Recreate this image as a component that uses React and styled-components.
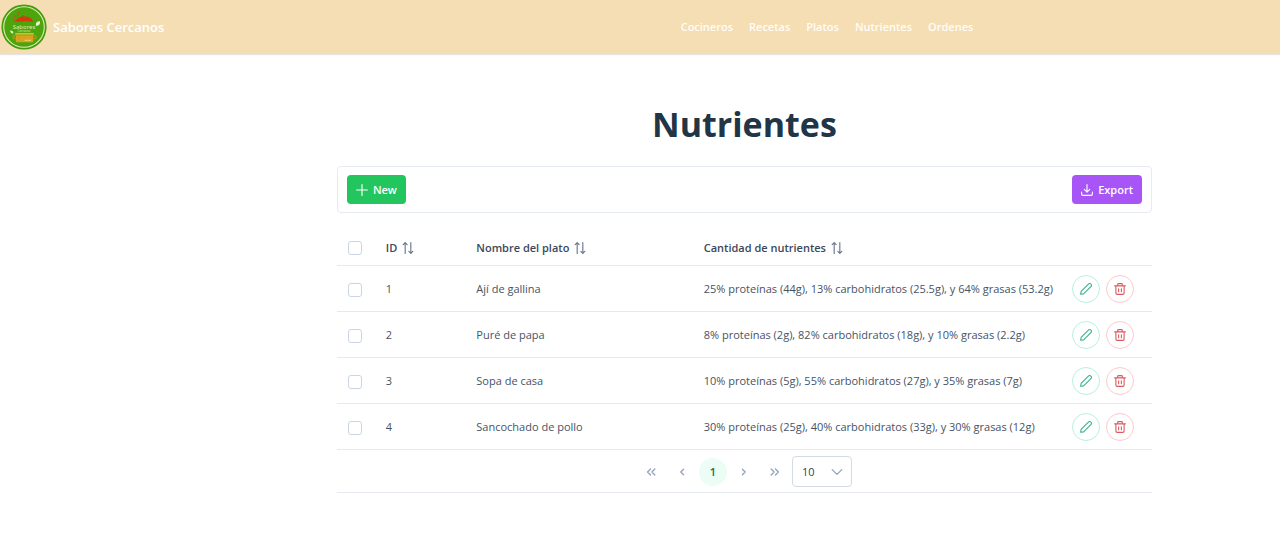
import React from 'react';
import styled, { createGlobalStyle, css } from 'styled-components';

const GlobalStyle = createGlobalStyle`
  *, *::before, *::after { box-sizing: border-box; }
  body {
    margin: 0;
    background: #ffffff;
    color: #465366;
    font-family: "Open Sans", "Noto Sans", sans-serif;
    font-size: 11px;
    line-height: 16px;
  }
  button, select, input { font: inherit; }
`;

const Header = styled.header`
  display: grid;
  grid-template-columns: 374fr 906fr;
  align-items: center;
  height: 54px;
  background: #f5deb3;
  box-shadow: 0 1px 1px #e5e5e5;
`;

const Brand = styled.a`
  display: flex;
  align-items: center;
  gap: 6px;
  padding-left: 1px;
  color: #ffffff;
  font-size: 13px;
  font-weight: 600;
  text-decoration: none;
  white-space: nowrap;
`;

const Nav = styled.nav`
  display: flex;
  justify-content: center;
  gap: 16px;
`;

const NavLink = styled.a`
  color: #fffdf8;
  font-weight: 600;
  text-decoration: none;
`;

const Main = styled.main`
  margin: 0 10% 0 26.32%;
  padding-top: 46px;
`;

const Title = styled.h1`
  margin: 0 0 18px;
  color: #213547;
  font-size: 34px;
  font-weight: 700;
  line-height: 48px;
  text-align: center;
`;

const Toolbar = styled.div`
  display: flex;
  align-items: center;
  justify-content: space-between;
  padding: 8px 9px;
  margin-bottom: 18px;
  border: 1px solid #e6ebf1;
  border-radius: 4px;
`;

const ActionButton = styled.button`
  display: flex;
  align-items: center;
  gap: 5px;
  height: 29px;
  padding: 0 9px;
  border: 0;
  border-radius: 4px;
  background: ${({ $color }) => $color};
  color: #ffffff;
  font-weight: 600;
`;

const Table = styled.table`
  width: 100%;
  table-layout: fixed;
  border-collapse: separate;
  border-spacing: 0;
`;

const Column = styled.col`
  width: ${({ $share }) => $share}%;
`;

const cell = css`
  padding: 0 9px;
  border-bottom: 1px solid #e6e9ee;
  text-align: left;
  white-space: nowrap;
`;

const HeadCell = styled.th`
  ${cell}
  height: 35px;
  font-weight: 600;
`;

const Cell = styled.td`
  ${cell}
  height: 46px;
`;

const SortButton = styled.button`
  display: flex;
  align-items: center;
  gap: 5px;
  padding: 0;
  border: 0;
  background: none;
  color: #64748b;
`;

const SortLabel = styled.span`
  color: #3b475a;
`;

const Checkbox = styled.input`
  appearance: none;
  display: block;
  width: 14px;
  height: 14px;
  margin: 2px 0 0 2px;
  border: 1px solid #cbd5e1;
  border-radius: 3px;
  background: #ffffff;
  &:checked { background: #10b981; }
  th > & { margin-top: 0; }
`;

const RowActions = styled.div`
  display: flex;
  gap: 6px;
`;

const RoundButton = styled.button`
  display: grid;
  place-items: center;
  width: 28px;
  height: 28px;
  padding: 0;
  border: 1px solid ${({ $danger }) => ($danger ? '#fecaca' : '#b5f2d8')};
  border-radius: 50%;
  background: #ffffff;
  color: ${({ $danger }) => ($danger ? '#dc5a5e' : '#3bb58b')};
`;

const Paginator = styled.nav`
  display: flex;
  align-items: center;
  justify-content: center;
  gap: 3px;
  padding: 6px 0 5px;
  border-bottom: 1px solid #e6e9ee;
`;

const PageButton = styled.button`
  display: grid;
  place-items: center;
  width: 28px;
  height: 28px;
  padding: 0;
  border: 0;
  border-radius: 50%;
  background: ${({ $active }) => ($active ? '#ecfdf5' : 'transparent')};
  color: ${({ $active }) => ($active ? '#047857' : '#94a3b8')};
  font-weight: 600;
`;

const SelectBox = styled.div`
  display: grid;
  align-items: center;
  color: #94a3b8;
  > * { grid-area: 1 / 1; }
  > svg {
    justify-self: end;
    margin-right: 9px;
    pointer-events: none;
  }
`;

const Select = styled.select`
  appearance: none;
  width: 60px;
  height: 31px;
  padding: 0 9px;
  border: 1px solid #d3dae4;
  border-radius: 4px;
  background: #ffffff;
  color: #334155;
`;

const Icon = ({ size = 12, stroke = 1.3, children }) => (
  <svg
    width={size}
    height={size}
    viewBox="0 0 14 14"
    fill="none"
    stroke="currentColor"
    strokeWidth={stroke}
    strokeLinecap="round"
    strokeLinejoin="round"
    aria-hidden="true"
  >
    {children}
  </svg>
);

const PlusIcon = () => <Icon><path d="M7 .7v12.6M.7 7h12.6" /></Icon>;
const DownloadIcon = () => (
  <Icon><path d="M7 .7v8.6M3.8 6.2 7 9.4l3.2-3.2M.7 9.5v2.3a1.5 1.5 0 0 0 1.5 1.5h9.6a1.5 1.5 0 0 0 1.5-1.5V9.5" /></Icon>
);
const SortIcon = () => (
  <Icon><path d="M3.7 13.3V.8M1.4 3.1 3.7.8 6 3.100M10.3.7v12.5M8 10.900l2.3 2.300 2.300-2.300" /></Icon>
);
const PencilIcon = () => (
  <Icon><path d="M.8 13.2 1.3 9.8 9.8 1.3a1.9 1.9 0 0 1 2.9 0 1.9 1.9 0 0 1 0 2.9L4.2 12.7Z" /></Icon>
);
const TrashIcon = () => (
  <Icon><path d="M.7 3.3h12.6M2.2 3.3v8.5a1.5 1.5 0 0 0 1.5 1.5h6.6a1.5 1.5 0 0 0 1.5-1.5V3.3M4.3 3.3V1.7a1 1 0 0 1 1-1h3.4a1 1 0 0 1 1 1v1.600M5.400 6.700v3.500M8.600 6.700v3.500" /></Icon>
);
const chevrons = {
  first: 'M6.5 3.500 3 7l3.500 3.500M11.500 3.500 8 7l3.500 3.500',
  prev: 'M8.800 3.800 5.600 7l3.200 3.200',
  next: 'M5.200 3.800 8.400 7l-3.200 3.200',
  last: 'M2.500 3.500 6 7l-3.500 3.500M7.500 3.500 11 7l-3.500 3.500',
  down: 'M1.400 4.200 7 9.800l5.600-5.600',
};
const Chevron = ({ kind }) => <Icon stroke={1.5}><path d={chevrons[kind]} /></Icon>;

const LogoScript = styled.text`
  font-family: "Noto Sans", sans-serif;
  font-weight: 400;
  fill: #dcebba;
  text-anchor: middle;
`;

const Logo = () => (
  <svg width="46" height="46" viewBox="0 0 46 46" aria-hidden="true">
    <circle cx="23" cy="23" r="22.6" fill="#459b0b" />
    <circle cx="23" cy="23" r="20.3" fill="#4ca50c" stroke="#e0edbd" strokeWidth="1.1" />
    <path d="M14 17c2-2.500 5-4.400 9-4.400 4.700 0 8.700 1.900 9.200 5.400-5-1.300-11-.5-16-.2Z" fill="#d53b0c" />
    <path d="M20.500 12.800c0-1.500 2.500-1.500 2.500 0" fill="none" stroke="#d53b0c" />
    <path d="M14 17.500c-2.500-2 1-4-.5-6.500M17 14c-2-2.500 2-3.500.5-7" fill="none" stroke="#c4511c" strokeWidth="1" />
    <path d="M35 22c-.7-3.200.8-4.700 3.900-4.800.6 2.900-.8 4.600-3.900 4.800Z" fill="#eaf3cc" />
    <path d="M12.300 29.500c-2.200.2-3-1-3.100-2.900 2.100-.1 3.200.8 3.100 2.900Z" fill="#eaf3cc" />
    <LogoScript x="23" y="24.600" fontSize="6">Sabores</LogoScript>
    <LogoScript x="23" y="28.200" fontSize="3">Cercanos</LogoScript>
    <path d="M14.200 29.800h18.600" stroke="#e5b52c" strokeWidth="1.800" />
    <path d="M14.800 31.300h17.500v5.400a1.500 1.500 0 0 1-1.500 1.500H16.300a1.500 1.500 0 0 1-1.500-1.500Z" fill="#d9a322" />
    <path d="M14.800 31.800h-2.700v2.800h2.700M32.300 31.800H35v2.800h-2.700M18 31.500v3.500" fill="none" stroke="#c8961c" />
    <path d="M23.500 36.300h6.500" stroke="#efcb6b" />
  </svg>
);

const links = ['Cocineros', 'Recetas', 'Platos', 'Nutrientes', 'Ordenes'];
const columnShares = [4.9, 11.1, 27.9, 45.2, 10.9];
const headings = ['ID', 'Nombre del plato', 'Cantidad de nutrientes'];
const dishes = [
  { id: 1, name: 'Ají de gallina', amount: '25% proteínas (44g), 13% carbohidratos (25.5g), y 64% grasas (53.2g)' },
  { id: 2, name: 'Puré de papa', amount: '8% proteínas (2g), 82% carbohidratos (18g), y 10% grasas (2.2g)' },
  { id: 3, name: 'Sopa de casa', amount: '10% proteínas (5g), 55% carbohidratos (27g), y 35% grasas (7g)' },
  { id: 4, name: 'Sancochado de pollo', amount: '30% proteínas (25g), 40% carbohidratos (33g), y 30% grasas (12g)' },
];

export default function App() {
  return (
    <>
      <GlobalStyle />
      <Header>
        <Brand href="#"><Logo />Sabores Cercanos</Brand>
        <Nav>
          {links.map((label) => <NavLink key={label} href="#">{label}</NavLink>)}
        </Nav>
      </Header>
      <Main>
        <Title>Nutrientes</Title>
        <Toolbar>
          <ActionButton type="button" $color="#22c55e"><PlusIcon />New</ActionButton>
          <ActionButton type="button" $color="#a855f7"><DownloadIcon />Export</ActionButton>
        </Toolbar>
        <Table>
          <colgroup>
            {columnShares.map((share) => <Column key={share} $share={share} />)}
          </colgroup>
          <thead>
            <tr>
              <HeadCell><Checkbox type="checkbox" aria-label="Seleccionar todo" /></HeadCell>
              {headings.map((heading) => (
                <HeadCell key={heading}>
                  <SortButton type="button"><SortLabel>{heading}</SortLabel><SortIcon /></SortButton>
                </HeadCell>
              ))}
              <HeadCell />
            </tr>
          </thead>
          <tbody>
            {dishes.map(({ id, name, amount }) => (
              <tr key={id}>
                <Cell><Checkbox type="checkbox" aria-label={`Seleccionar ${name}`} /></Cell>
                <Cell>{id}</Cell>
                <Cell>{name}</Cell>
                <Cell>{amount}</Cell>
                <Cell>
                  <RowActions>
                    <RoundButton type="button" aria-label={`Editar ${name}`}><PencilIcon /></RoundButton>
                    <RoundButton type="button" $danger aria-label={`Eliminar ${name}`}><TrashIcon /></RoundButton>
                  </RowActions>
                </Cell>
              </tr>
            ))}
          </tbody>
        </Table>
        <Paginator aria-label="Paginación">
          <PageButton type="button" aria-label="Primera página"><Chevron kind="first" /></PageButton>
          <PageButton type="button" aria-label="Página anterior"><Chevron kind="prev" /></PageButton>
          <PageButton type="button" $active>1</PageButton>
          <PageButton type="button" aria-label="Página siguiente"><Chevron kind="next" /></PageButton>
          <PageButton type="button" aria-label="Última página"><Chevron kind="last" /></PageButton>
          <SelectBox>
            <Select aria-label="Filas por página" defaultValue="10">
              <option>5</option>
              <option>10</option>
              <option>25</option>
            </Select>
            <Chevron kind="down" />
          </SelectBox>
        </Paginator>
      </Main>
    </>
  );
}
